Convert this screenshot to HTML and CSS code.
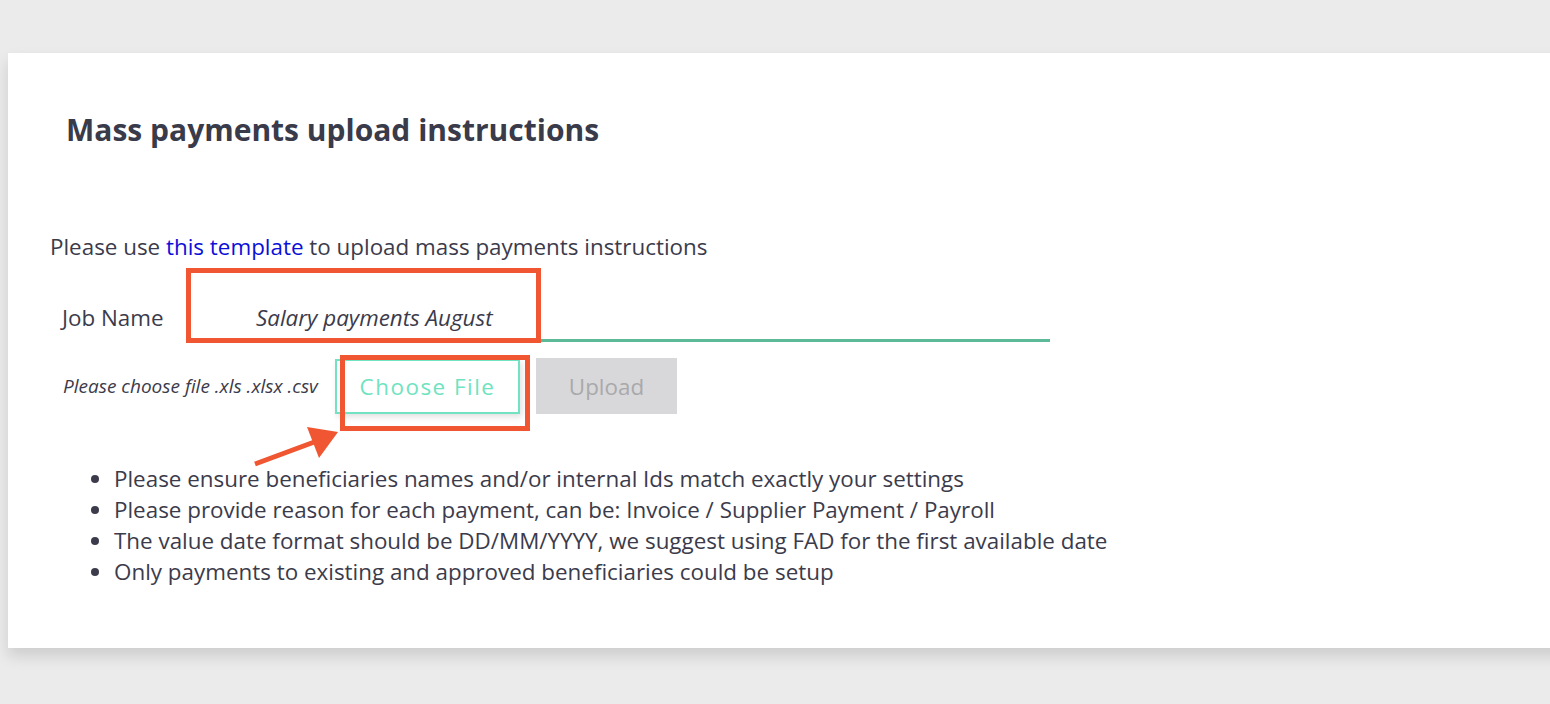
FILE: index.html
```html
<!DOCTYPE html>
<html>
<head>
<meta charset="utf-8">
<link rel="stylesheet" href="styles.css">
</head>
<body>
<div class="card">
  <h1 class="title">Mass payments upload instructions</h1>
  <p class="intro">Please use <a class="link" href="#">this template</a> to upload mass payments instructions</p>
  <div class="job-row">
    <span class="job-label">Job Name</span>
    <div class="job-input">
      <span class="job-value">Salary payments August</span>
      <div class="mark mark-job"></div>
    </div>
  </div>
  <div class="file-row">
    <span class="file-hint">Please choose file .xls .xlsx .csv</span>
    <div class="choose-wrap">
      <button class="btn-choose">Choose File</button>
      <div class="mark mark-choose"></div>
      <svg class="arrow" width="100" height="50" viewBox="0 0 100 50">
        <line x1="10" y1="42" x2="72" y2="19" stroke="#ef5631" stroke-width="5"/>
        <polygon points="93,10 62,5 74,36" fill="#ef5631"/>
      </svg>
    </div>
    <button class="btn-upload">Upload</button>
  </div>
  <ul class="rules">
    <li>Please ensure beneficiaries names and/or internal Ids match exactly your settings</li>
    <li>Please provide reason for each payment, can be: Invoice / Supplier Payment / Payroll</li>
    <li>The value date format should be DD/MM/YYYY, we suggest using FAD for the first available date</li>
    <li>Only payments to existing and approved beneficiaries could be setup</li>
  </ul>
</div>
</body>
</html>
```
FILE: styles.css
```css
* { box-sizing: border-box; }
html, body { margin: 0; padding: 0; }
body {
  background: #ebebeb;
  font-family: "Open Sans", "Liberation Sans", sans-serif;
  color: #3b3b4b;
  width: 1550px;
  height: 704px;
  overflow: hidden;
}
.card {
  margin: 53px 0 0 8px;
  width: 1560px;
  height: 595px;
  background: #fff;
  box-shadow: 0 8px 14px rgba(0,0,0,0.13);
  padding: 57px 0 0 42px;
}
.title {
  margin: 0 0 0 16px;
  font-size: 30px;
  font-weight: 700;
  line-height: 40px;
  color: #393a4a;
}
.intro {
  margin: 82px 0 0 0;
  font-size: 22.4px;
  line-height: 30px;
}
.link { color: #0a10d8; text-decoration: none; }
.job-row {
  display: flex;
  align-items: flex-end;
  margin-top: 20px;
}
.job-label {
  margin-left: 12px;
  width: 128px;
  font-size: 22.4px;
  line-height: 30px;
  padding-bottom: 9px;
}
.job-input {
  position: relative;
  width: 860px;
  height: 60px;
  border-bottom: 3px solid #5dba98;
  padding: 21px 0 0 66px;
}
.job-value {
  display: block;
  font-style: italic;
  font-size: 22.4px;
  line-height: 30px;
}
.mark {
  position: absolute;
  border: 5px solid #ef5631;
}
.mark-job {
  left: -4px;
  top: -14px;
  width: 355px;
  height: 75px;
}
.file-row {
  display: flex;
  align-items: center;
  margin-top: 16px;
}
.file-hint {
  margin-left: 13px;
  width: 272px;
  font-style: italic;
  font-size: 19px;
}
.choose-wrap { position: relative; height: 55px; }
.btn-choose {
  display: block;
  width: 185px;
  height: 55px;
  border: 2px solid #72e3c2;
  background: #fff;
  color: #6fe3c0;
  font-family: "Open Sans", sans-serif;
  font-size: 22.4px;
  letter-spacing: 1.5px;
  box-shadow: 2px 3px 6px rgba(0,0,0,0.12);
  padding: 0;
}
.mark-choose {
  left: 5px;
  top: -4px;
  width: 190px;
  height: 76px;
}
.arrow {
  position: absolute;
  left: -90px;
  top: 63px;
}
.btn-upload {
  margin-left: 16px;
  width: 141px;
  height: 56px;
  border: none;
  background: #d8d8da;
  color: #a9a9ab;
  font-family: "Open Sans", sans-serif;
  font-size: 22.4px;
  padding: 0;
}
.rules {
  margin: 49px 0 0 0;
  padding-left: 64px;
  font-size: 22.4px;
  line-height: 31px;
}
```
